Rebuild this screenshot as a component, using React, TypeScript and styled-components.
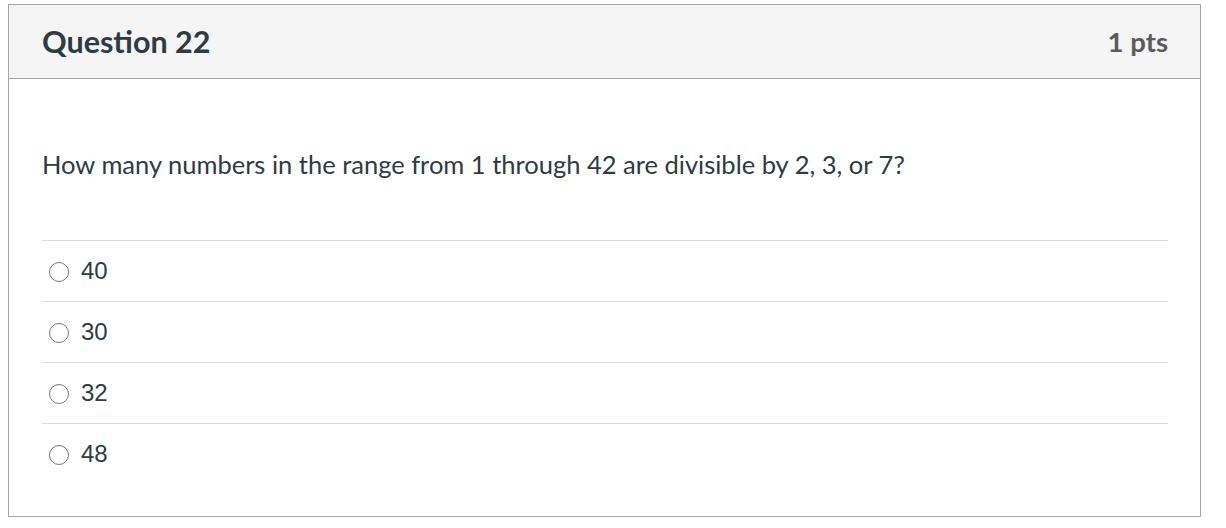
import * as React from 'react';
import styled, { createGlobalStyle } from 'styled-components';

const Global = createGlobalStyle`
	body {
		margin: 4px 0 0 8px;
		background: #fff;
		font-family: Lato, 'Liberation Sans', sans-serif;
		color: #2d3b45;
	}
`;

const Card = styled.div`
	width: 1193px;
	height: 513px;
	box-sizing: border-box;
	border: 1px solid #a5a5a5;
	display: flex;
	flex-direction: column;
`;

const Header = styled.header`
	height: 74px;
	box-sizing: border-box;
	background: #f5f5f5;
	border-bottom: 1px solid #a5a5a5;
	padding: 0 32px 0 33px;
	display: flex;
	align-items: center;
	justify-content: space-between;
`;

const Title = styled.h2`
	margin: 0;
	font-size: 30.5px;
	font-weight: 700;
	color: #2d3b45;
	margin-top: -2px;
`;

const Points = styled.div`
	font-size: 27.5px;
	font-weight: 700;
	color: #5b5b5b;
`;

const Body = styled.div`
	padding: 70px 32px 0 33px;
`;

const Prompt = styled.p`
	margin: 0 0 61px;
	font-size: 25.5px;
	line-height: 30px;
	color: #2d3b45;
`;

const Answer = styled.label`
	display: flex;
	align-items: center;
	gap: 12px;
	height: 61px;
	box-sizing: border-box;
	border-top: 1px solid #dcdcdc;
	padding-left: 7px;
	font-family: 'Liberation Sans', Arial, sans-serif;
	font-size: 24px;
	color: #2d3b45;
	cursor: pointer;
`;

const Radio = styled.span`
	width: 20px;
	height: 20px;
	box-sizing: border-box;
	border: 1.5px solid #777;
	border-radius: 50%;
	margin-top: 2px;
`;

const answers = ['40', '30', '32', '48'];

export default function App() {
	return (
		<>
			<Global />
			<Card>
				<Header>
					<Title>Question 22</Title>
					<Points>1 pts</Points>
				</Header>
				<Body>
					<Prompt>How many numbers in the range from 1 through 42 are divisible by 2, 3, or 7?</Prompt>
					{answers.map(a => (
						<Answer key={a}>
							<Radio />
							{a}
						</Answer>
					))}
				</Body>
			</Card>
		</>
	);
}
